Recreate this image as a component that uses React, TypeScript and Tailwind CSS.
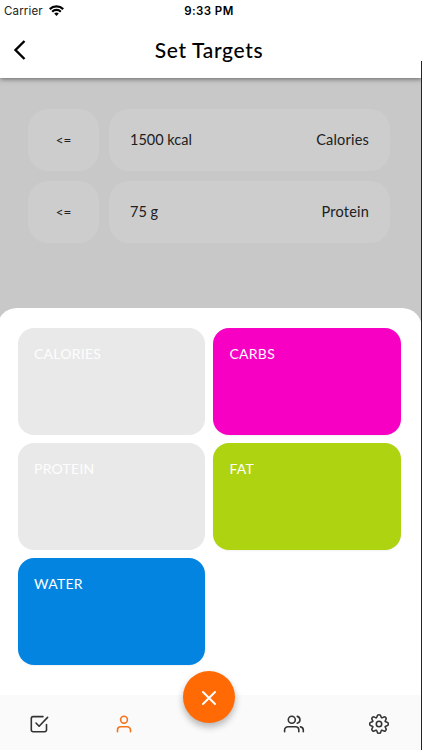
import type { ReactNode } from 'react';
import { clsx } from 'clsx';

interface Target {
  label: string;
  amount: string;
}

interface Nutrient {
  name: string;
  color: string;
  disabled?: boolean;
}

const targets: Target[] = [
  { label: 'Calories', amount: '1500 kcal' },
  { label: 'Protein', amount: '75 g' },
];

const nutrients: Nutrient[] = [
  { name: 'CALORIES', color: 'bg-[#e9e9e9]', disabled: true },
  { name: 'CARBS', color: 'bg-[#f800c4]' },
  { name: 'PROTEIN', color: 'bg-[#e9e9e9]', disabled: true },
  { name: 'FAT', color: 'bg-[#aed310]' },
  { name: 'WATER', color: 'bg-[#0284e0]' },
];

const gearTeeth = [0, 45, 90, 135, 180, 225, 270, 315];

function Icon({ children }: { children: ReactNode }) {
  return (
    <svg width="24" height="24" viewBox="0 0 24 24" fill="none" stroke="currentColor" strokeWidth="1.6" strokeLinecap="round" strokeLinejoin="round">
      {children}
    </svg>
  );
}

function CheckSquareIcon() {
  return (
    <Icon>
      <path d="M16 4.6H6.1A1.8 1.8 0 0 0 4.3 6.4v11.5a1.8 1.8 0 0 0 1.8 1.8h11.6a1.8 1.8 0 0 0 1.8-1.8V12.6" />
      <path d="m9 11 3.1 3.2 8.5-8.8" />
    </Icon>
  );
}

function UserIcon() {
  return (
    <Icon>
      <circle cx="12" cy="7.7" r="3.4" />
      <path d="M5.5 19.8v-1.7a3.3 3.3 0 0 1 3.3-3.3h6.4a3.3 3.3 0 0 1 3.3 3.3v1.7" />
    </Icon>
  );
}

function UsersIcon() {
  return (
    <Icon>
      <circle cx="9.8" cy="7.8" r="3.5" />
      <path d="M2.6 19.8v-1.7a3.3 3.3 0 0 1 3.3-3.3h7.6a3.3 3.3 0 0 1 3.3 3.3v1.7" />
      <path d="M15.3 4.4a3.5 3.5 0 0 1 0 6.8" />
      <path d="M18.4 14.9a3.2 3.2 0 0 1 2.9 3.2v1.7" />
    </Icon>
  );
}

function GearIcon() {
  return (
    <Icon>
      <g transform="translate(12 12)">
        <circle r="2.7" />
        {gearTeeth.map((angle) => (
          <path
            key={angle}
            transform={`rotate(${angle})`}
            d="M-2.64-6.37C-2-6.64-1.9-7.2-1.75-8.1C-1.6-9-1-9.3 0-9.3C1-9.3 1.6-9 1.75-8.1C1.9-7.2 2-6.64 2.64-6.37"
          />
        ))}
      </g>
    </Icon>
  );
}

function StatusBar() {
  return (
    <div className="grid h-[23px] grid-cols-3 items-center px-1 font-['Inter',sans-serif] text-[11.5px] leading-none text-black">
      <div className="flex items-center gap-1.5">
        <span className="tracking-[0.15px] text-[#222]">Carrier</span>
        <svg className="-translate-y-px" width="15" height="11" viewBox="0 0 15 11" fill="none" stroke="#000" strokeWidth="2.2">
          <path d="M0.8 4.1a9.5 9.5 0 0 1 13.4 0" />
          <path d="M3.2 6.7a6.1 6.1 0 0 1 8.6 0" />
          <path d="M7.5 11 5.2 8.6a3.3 3.3 0 0 1 4.6 0z" fill="#000" stroke="none" />
        </svg>
      </div>
      <span className="pr-1 text-center font-semibold tracking-[0.4px] whitespace-nowrap">9:33 PM</span>
    </div>
  );
}

function Header() {
  return (
    <div className="relative z-10 h-[78px] shrink-0 bg-white shadow-[0_1px_5px_rgba(0,0,0,0.5)]">
      <StatusBar />
      <div className="grid h-[54px] grid-cols-[40px_1fr_40px] items-center">
        <button className="pl-[13px]" aria-label="Back">
          <svg width="13" height="20" viewBox="0 0 13 20" fill="none" stroke="#000" strokeWidth="2.4">
            <path d="M11.5 1 2.5 10l9 9" />
          </svg>
        </button>
        <h1 className="pr-1 text-center text-[21px] font-medium tracking-[0.65px] text-black">Set Targets</h1>
      </div>
    </div>
  );
}

function TargetRow({ target }: { target: Target }) {
  return (
    <div className="flex h-[62px] gap-[10px] text-[14.5px] text-[#202020]">
      <div className="flex w-[71px] items-center justify-center rounded-[20px] bg-[#cdcdcd] pt-px text-[13.5px]">&lt;=</div>
      <div className="flex flex-1 items-center justify-between rounded-[20px] bg-[#cdcdcd] pr-[21px] pl-[21px]">
        <span>{target.amount}</span>
        <span className="tracking-[0.2px]">{target.label}</span>
      </div>
    </div>
  );
}

function NutrientSheet() {
  return (
    <div className="-ml-[3px] grid h-[387px] shrink-0 grid-cols-2 content-start gap-x-2 gap-y-[8.5px] rounded-t-[20px] bg-white pt-5 pr-[21.5px] pl-[20.5px]">
      {nutrients.map((n) => (
        <button
          key={n.name}
          disabled={n.disabled}
          className={clsx(
            'flex h-[106.5px] items-start rounded-[16px] px-[16.5px] pt-[15px] text-[14px] leading-[22px] tracking-[0.25px]',
            n.color,
            n.disabled ? 'text-white/90' : 'text-white shadow-[0_1px_2px_rgba(0,0,0,0.06)]'
          )}
        >
          {n.name}
        </button>
      ))}
    </div>
  );
}

function Tab({ active, children }: { active?: boolean; children: ReactNode }) {
  return (
    <button className={clsx('flex h-full w-[85px] items-center justify-center pt-[3px]', active ? 'text-[#f5741c]' : 'text-[#333]')}>
      {children}
    </button>
  );
}

function TabBar() {
  return (
    <div className="relative flex h-[55px] shrink-0 justify-between bg-[#fafafa] pr-px">
      <div className="-ml-1 flex">
        <Tab><CheckSquareIcon /></Tab>
        <Tab active><UserIcon /></Tab>
      </div>
      <div className="flex">
        <Tab><UsersIcon /></Tab>
        <Tab><GearIcon /></Tab>
      </div>
      {/* Floating close button */}
      <button
        aria-label="Close"
        className="absolute -top-6 left-[183px] flex size-[52px] items-center justify-center rounded-full bg-[#ff6a05] pt-px text-white shadow-[0_4px_7px_rgba(0,0,0,0.28)]"
      >
        <svg width="16" height="16" viewBox="0 0 16 16" stroke="currentColor" strokeWidth="2" strokeLinecap="round">
          <path d="m2 2 12 12M14 2 2 14" />
        </svg>
      </button>
    </div>
  );
}

export default function App() {
  return (
    <div className="relative flex h-[750px] w-[422px] flex-col overflow-hidden bg-[#c8c8c8] font-['Lato',sans-serif]">
      <Header />
      <div className="flex flex-1 flex-col gap-[10px] pt-[31px] pr-8 pl-7">
        {targets.map((t) => (
          <TargetRow key={t.label} target={t} />
        ))}
      </div>
      <NutrientSheet />
      <TabBar />
      {/* Right screen edge */}
      <div className="absolute top-[61px] right-0 bottom-0 z-20 w-px bg-[#252527]" />
    </div>
  );
}
